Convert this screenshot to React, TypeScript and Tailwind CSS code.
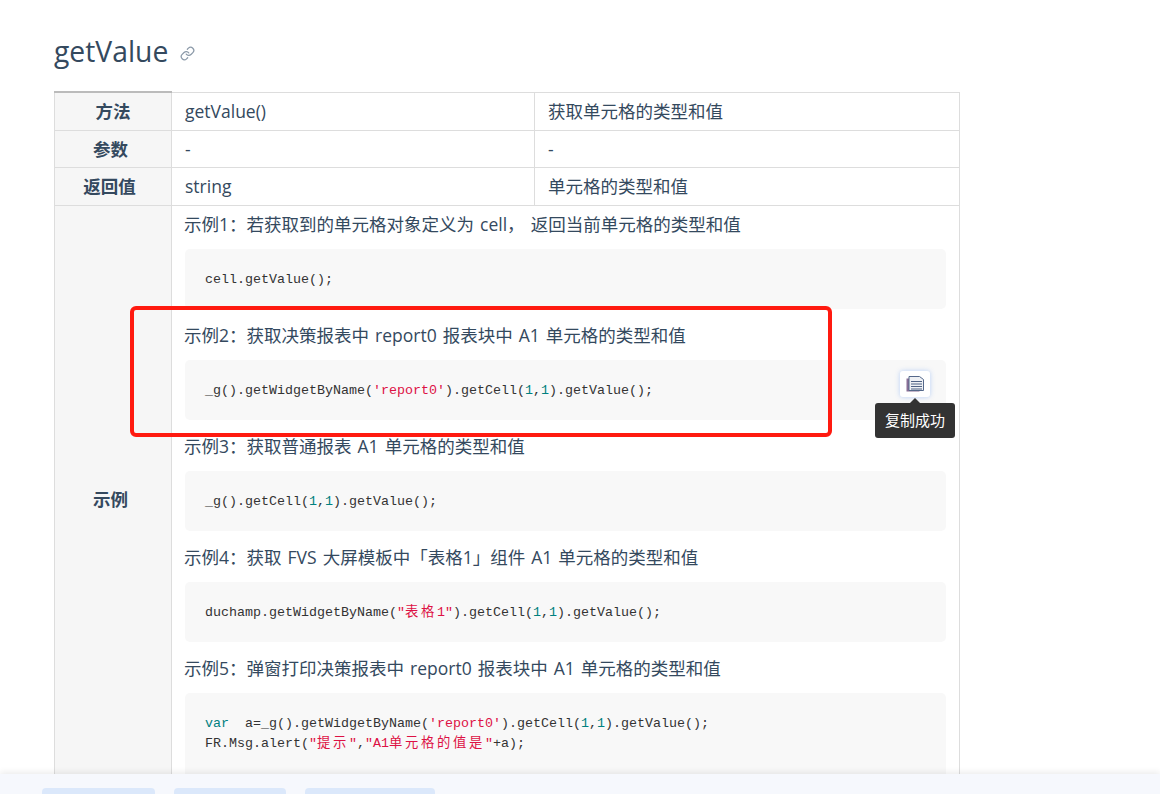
import { Link } from 'lucide-react'

const sans = 'font-["Open_Sans","Noto_Sans_CJK_SC",sans-serif]'

function Str({ children }: { children: React.ReactNode }) {
  return <span className="text-[#dd1144]">{children}</span>
}

function Num({ children }: { children: React.ReactNode }) {
  return <span className="text-[#008080]">{children}</span>
}

// cjk glyphs in the code blocks sit on a 16px grid
function Wide({ children }: { children: React.ReactNode }) {
  return <span className="tracking-[2.67px]">{children}</span>
}

function Example({ title, children, tall }: { title: string; children: React.ReactNode; tall?: boolean }) {
  return (
    <div>
      <p className="-ml-px h-[37px] text-[17.5px] leading-[37px] whitespace-nowrap [word-spacing:1.5px]">{title}</p>
      <pre
        className={`mt-[6px] mb-[8px] rounded-[5px] bg-[#f8f8f8] px-[20px] pt-[21px] font-['Liberation_Mono','Noto_Sans_CJK_SC',monospace] text-[13.33px] leading-[20px] text-[#333333] ${
          tall ? 'h-[92px]' : 'h-[60px]'
        }`}
      >
        {children}
      </pre>
    </div>
  )
}

const cell = 'border border-[#dddddd] px-[13px] text-[17.5px] font-normal'
const head = 'border border-[#dddddd] bg-[#f6f6f6] text-center text-[17.5px] font-bold'

export default function App() {
  return (
    <div className={`relative h-[794px] w-[1160px] overflow-hidden bg-white text-[#34495e] ${sans}`}>
      <div className="ml-[54px] w-[905px] pt-[27px]">
        <h2 className="flex h-[48px] items-center text-[28.3px] font-normal leading-[48px]">
          getValue
          <Link size={15} strokeWidth={2} className="ml-[12px] mt-[4px] text-[#8b99a8]" />
        </h2>
        <table className="mt-[16px] w-[905px] table-fixed border-collapse">
          <colgroup>
            <col className="w-[117px]" />
            <col className="w-[363px]" />
            <col className="w-[425px]" />
          </colgroup>
          <tbody>
            <tr className="h-[38px]">
              <th className={`${head} border-t-2 border-t-[#bbbbbb]`}>方法</th>
              <td className={cell}>getValue()</td>
              <td className={cell}>获取单元格的类型和值</td>
            </tr>
            <tr className="h-[37px]">
              <th className={`${head} pr-[5px] pt-[2px]`}>参数</th>
              <td className={`${cell} pt-[2px]`}>-</td>
              <td className={`${cell} pt-[2px]`}>-</td>
            </tr>
            <tr className="h-[38px]">
              <th className={`${head} pr-[7px]`}>返回值</th>
              <td className={cell}>string</td>
              <td className={cell}>单元格的类型和值</td>
            </tr>
            <tr>
              <th className={`${head} pr-[5px]`}>示例</th>
              <td className={`${cell} align-top`} colSpan={2}>
                <Example title="示例1：若获取到的单元格对象定义为 cell， 返回当前单元格的类型和值">cell.getValue();</Example>
                <Example title="示例2：获取决策报表中 report0 报表块中 A1 单元格的类型和值">
                  _g().getWidgetByName(<Str>'report0'</Str>).getCell(<Num>1</Num>,<Num>1</Num>).getValue();
                </Example>
                <Example title="示例3：获取普通报表 A1 单元格的类型和值">
                  _g().getCell(<Num>1</Num>,<Num>1</Num>).getValue();
                </Example>
                <Example title="示例4：获取 FVS 大屏模板中「表格1」组件 A1 单元格的类型和值">
                  duchamp.getWidgetByName(<Str>"<Wide>表格</Wide>1"</Str>).getCell(<Num>1</Num>,<Num>1</Num>).getValue();
                </Example>
                <Example tall title="示例5：弹窗打印决策报表中 report0 报表块中 A1 单元格的类型和值">
                  <Num>var</Num>  a=_g().getWidgetByName(<Str>'report0'</Str>).getCell(<Num>1</Num>,<Num>1</Num>).getValue();
                  {'\n'}FR.Msg.alert(<Str>"<Wide>提示</Wide>"</Str>,<Str>"A1<Wide>单元格的值是</Wide>"</Str>+a);
                </Example>
              </td>
            </tr>
          </tbody>
        </table>
      </div>

      {/* red annotation */}
      <div className="absolute left-[130px] top-[306px] h-[131px] w-[702px] rounded-[6px] border-4 border-[#ff1a10]" />

      {/* copy button + tooltip */}
      <div className="absolute left-[900px] top-[371px] flex h-[26px] w-[30px] items-center justify-center rounded-[3px] bg-white shadow-[0_0_5px_rgba(66,133,244,0.35)]">
        <svg width="18" height="16" viewBox="0 0 18 16" fill="none">
          <path d="M.5 2.5h3v12h10v1H.5z" fill="#8a6f96" />
          <path d="M3 .5h10.5l4 3v11H3z" fill="#eef0f4" stroke="#55688a" strokeWidth="1" />
          <path d="M5 5.5h11M5 8h11M5 10.5h11M5 13h11" stroke="#4f6284" strokeWidth="1.2" />
        </svg>
      </div>
      <div className="absolute left-[875px] top-[403px] flex h-[35px] w-[80px] items-center justify-center rounded-[3px] bg-[#333333] text-[15px] text-white">
        复制成功
        <span className="absolute -top-[5px] left-[35px] h-0 w-0 border-x-[5px] border-b-[5px] border-x-transparent border-b-[#333333]" />
      </div>

      {/* bottom bar */}
      <div className="absolute bottom-0 left-0 flex h-[20px] w-full items-start gap-[19px] bg-[#f6f8fd] pl-[42px] pt-[14px] shadow-[0_-2px_6px_rgba(0,0,0,0.08)]">
        <div className="h-[6px] w-[113px] rounded-t-[4px] bg-[#dbe8fb]" />
        <div className="h-[6px] w-[112px] rounded-t-[4px] bg-[#dbe8fb]" />
        <div className="h-[6px] w-[130px] rounded-t-[4px] bg-[#dbe8fb]" />
      </div>
    </div>
  )
}
